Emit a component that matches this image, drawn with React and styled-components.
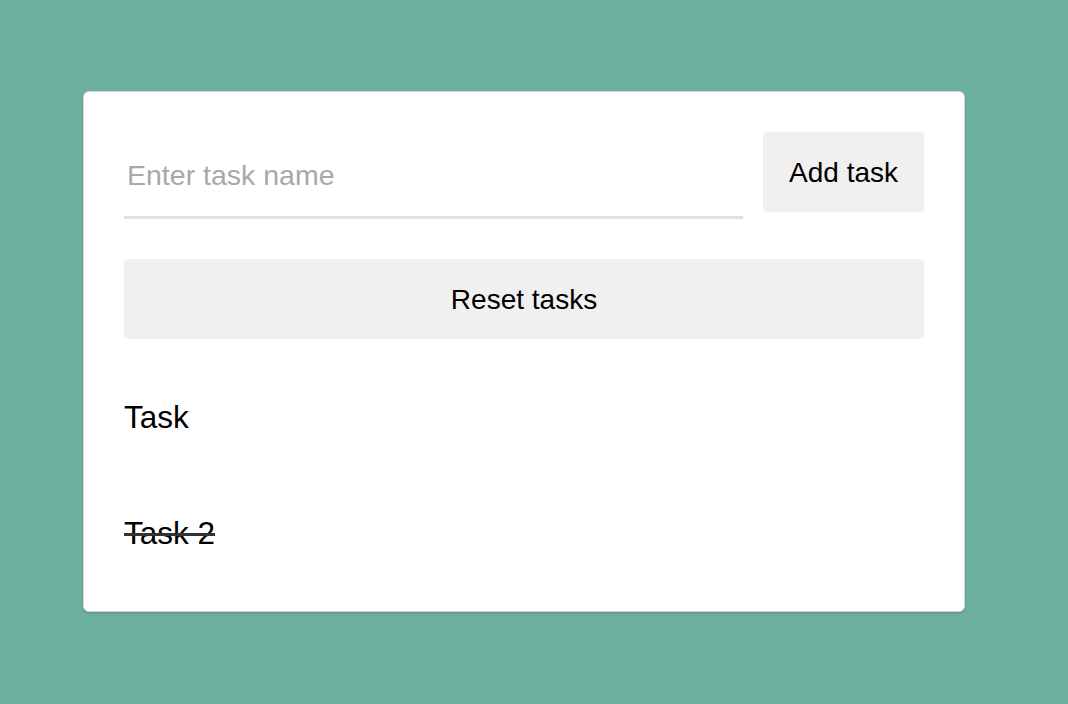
import React, { useState } from 'react'
import styled, { createGlobalStyle } from 'styled-components'

const GlobalStyle = createGlobalStyle`
  html, body {
    margin: 0;
    padding: 0;
    background: #6caf9e;
    font-family: "Liberation Sans", Arial, sans-serif;
  }
`

function App() {
  const [tasks, setTasks] = useState([
    { name: 'Task', done: false },
    { name: 'Task 2', done: true },
  ])
  const [name, setName] = useState('')

  const addTask = (e) => {
    e.preventDefault()
    if (!name.trim()) return
    setTasks([...tasks, { name, done: false }])
    setName('')
  }

  const toggle = (i) => {
    setTasks(tasks.map((t, j) => (j === i ? { ...t, done: !t.done } : t)))
  }

  return (
    <Page>
      <GlobalStyle />
      <Card>
        <Form onSubmit={addTask}>
          <TaskInput
            type="text"
            placeholder="Enter task name"
            value={name}
            onChange={(e) => setName(e.target.value)}
          />
          <Button type="submit">Add task</Button>
        </Form>
        <Button $wide onClick={() => setTasks([])}>Reset tasks</Button>
        <TaskList>
          {tasks.map((t, i) => (
            <TaskItem key={i} $done={t.done} onClick={() => toggle(i)}>
              {t.name}
            </TaskItem>
          ))}
        </TaskList>
      </Card>
    </Page>
  )
}

const Page = styled.div`
  min-height: 100vh;
  box-sizing: border-box;
  padding: 91px 0 0 83px;
`

const Card = styled.div`
  width: 882px;
  box-sizing: border-box;
  background: #fff;
  border: 1px solid #d6d6d6;
  border-radius: 6px;
  box-shadow: 0 1px 2px rgba(0, 0, 0, 0.2);
  padding: 40px;
  display: flex;
  flex-direction: column;
`

const Form = styled.form`
  display: flex;
  align-items: flex-start;
  gap: 20px;
  margin: 0 0 40px;
`

const TaskInput = styled.input`
  flex: 1;
  height: 87px;
  box-sizing: border-box;
  border: none;
  border-bottom: 3px solid #e0e0e0;
  outline: none;
  padding: 2px 3px 0;
  font-family: inherit;
  font-size: 28.5px;
  color: #000;
  background: transparent;
  &::placeholder {
    color: #a8a8a8;
  }
`

const Button = styled.button`
  height: 80px;
  box-sizing: border-box;
  padding: 2px 26px 0;
  width: ${(p) => (p.$wide ? '100%' : 'auto')};
  border: none;
  border-radius: 4px;
  background: #f0f0f0;
  font-family: inherit;
  font-size: 28px;
  color: #000;
  cursor: pointer;
`

const TaskList = styled.ul`
  list-style: none;
  margin: 0;
  padding: 0;
`

const TaskItem = styled.li`
  margin-top: 40px;
  padding: 20px 0;
  font-size: 31.5px;
  line-height: 36px;
  color: #000;
  cursor: pointer;
  text-decoration: ${(p) => (p.$done ? 'line-through' : 'none')};
  text-decoration-color: #333;
  text-decoration-thickness: 3px;
`

export default App
